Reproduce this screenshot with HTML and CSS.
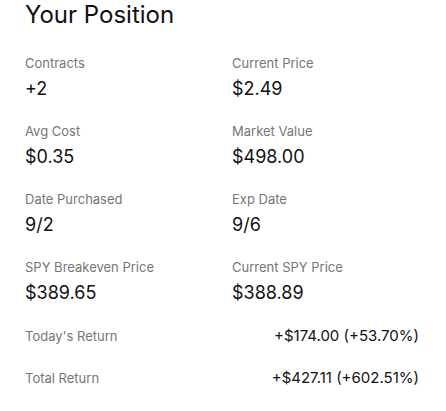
FILE: index.html
```html
<!DOCTYPE html>
<html lang="en">
<head>
<meta charset="utf-8">
<title>Your Position</title>
<link rel="stylesheet" href="styles.css">
</head>
<body>
<main class="position">
  <h1 class="title">Your Position</h1>
  <div class="stats">
    <div class="stat"><div class="label">Contracts</div><div class="value">+2</div></div>
    <div class="stat"><div class="label">Current Price</div><div class="value">$2.49</div></div>
    <div class="stat"><div class="label">Avg Cost</div><div class="value">$0.35</div></div>
    <div class="stat"><div class="label">Market Value</div><div class="value">$498.00</div></div>
    <div class="stat"><div class="label">Date Purchased</div><div class="value">9/2</div></div>
    <div class="stat"><div class="label">Exp Date</div><div class="value">9/6</div></div>
    <div class="stat"><div class="label">SPY Breakeven Price</div><div class="value">$389.65</div></div>
    <div class="stat"><div class="label">Current SPY Price</div><div class="value">$388.89</div></div>
  </div>
  <div class="returns">
    <div class="return-row"><span class="return-label">Today's Return</span><span class="return-value">+$174.00 (+53.70%)</span></div>
    <div class="return-row"><span class="return-label">Total Return</span><span class="return-value">+$427.11 (+602.51%)</span></div>
  </div>
</main>
</body>
</html>
```
FILE: styles.css
```css
html, body {
  margin: 0;
  padding: 0;
  background: #ffffff;
}
body {
  font-family: Inter, "Noto Sans", Arial, sans-serif;
  color: #111111;
}
.position {
  padding: 0 27px 0 25px;
}
.title {
  margin: 0;
  font-size: 24px;
  line-height: 30px;
  font-weight: 400;
  color: #111111;
}
.stats {
  display: grid;
  grid-template-columns: 207px 1fr;
  row-gap: 23px;
  margin-top: 25px;
}
.stat {
  display: flex;
  flex-direction: column;
  gap: 7px;
}
.label {
  font-size: 13px;
  line-height: 16px;
  color: #767676;
}
.value {
  font-size: 18px;
  line-height: 22px;
  color: #111111;
}
.returns {
  display: flex;
  flex-direction: column;
  gap: 24px;
  margin-top: 23px;
}
.return-row {
  display: flex;
  justify-content: space-between;
  align-items: baseline;
  line-height: 18px;
}
.return-label {
  font-size: 13px;
  color: #767676;
}
.return-value {
  font-size: 15px;
  color: #111111;
}
```
